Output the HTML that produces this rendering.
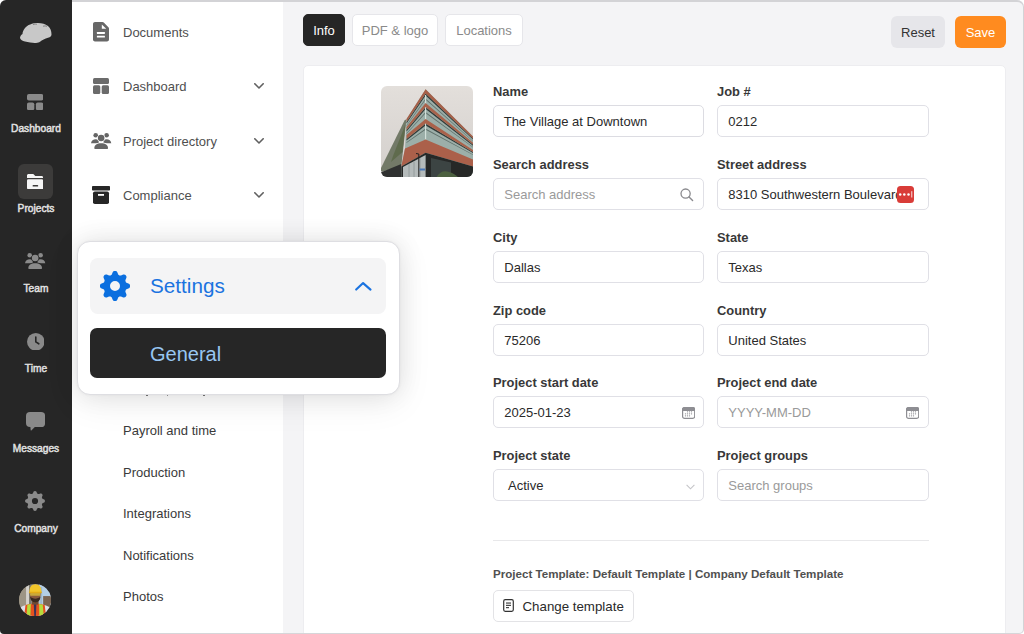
<!DOCTYPE html>
<html><head><meta charset="utf-8">
<style>
*{box-sizing:border-box;margin:0;padding:0}
html,body{width:1024px;height:634px;overflow:hidden;background:#fff;font-family:"Liberation Sans",sans-serif}
.win{position:absolute;left:0;top:0;width:1024px;height:634px;border-radius:6px 7px 5px 4px;overflow:hidden;background:#f4f4f6;}
.frame{position:absolute;left:72px;top:0;width:952px;height:634px;border-radius:0 7px 5px 0;border-top:2px solid #d3d3d6;border-right:1.4px solid #d3d3d6;border-bottom:1.4px solid #d6d6d9;pointer-events:none}
.abs{position:absolute}
.side{position:absolute;left:0;top:0;width:72px;height:634px;background:#262626}
.nav2{position:absolute;left:72px;top:0;width:211px;height:634px;background:#fff}
.main{position:absolute;left:283px;top:0;width:741px;height:634px;background:#f4f4f6}
.sl{position:absolute;left:0;width:72px;text-align:center;color:#e2e2e2;font-size:10.2px;font-weight:normal;-webkit-text-stroke:0.45px #e2e2e2;line-height:12px}
.n2{position:absolute;left:123px;font-size:13px;color:#4f4f4f;line-height:16px}
.n3{position:absolute;left:123px;font-size:13px;color:#3a3a3a;line-height:16px}
.chev{position:absolute;left:254px;width:10px;height:6px}
.tab{position:absolute;top:13.5px;height:32px;border-radius:5px;font-size:13px;line-height:32px;text-align:center;background:#fff;color:#8a8a8a;border:1px solid #e6e6ea}
.card{position:absolute;left:302.5px;top:64.5px;width:703px;height:600px;background:#fff;border-radius:5px;border:1px solid #ededf0}
.lbl{position:absolute;font-size:12.9px;font-weight:bold;color:#383838;line-height:16px}
.inp{position:absolute;margin-top:-1px;height:32px;width:211px;border:1px solid #e0e0e6;border-radius:5px;background:#fff;font-size:13px;line-height:31.8px;padding-left:10.3px;color:#2a2a2a}
.ph{color:#9a9a9a}
</style></head><body>
<div class="win">
  <div class="side">
    <!-- logo hard hat -->
    <svg class="abs" style="left:19.5px;top:22.7px" width="32" height="21" viewBox="0 0 32 21"><path fill="#c8c8c8" d="M0 15.1 C0.5 17 2.5 18.2 5 18.6 C9 19.6 13 20.2 16 20 C18 19.8 19 19.4 20 18.8 C22 17 25 15.8 28 14.8 C30.5 14 31.5 13 31.5 11.5 C31.5 8 30.5 5 28 3 C25.5 1 22 0 18 0 C12 0 7.5 2 5 5 C3.5 7 2.5 9 2.5 11 C1 12 0 13.5 0 15.1Z"/><path d="M13 1.6 C14.5 1 16 1 17 1.3 M23 3.2 C24.5 2.8 26 2.8 27 3.3" stroke="#555" stroke-width="0.6" fill="none"/></svg>
    <!-- dashboard -->
    <svg class="abs" style="left:27.2px;top:93.7px" width="16.2" height="16.2" viewBox="0 0 16.2 16.2"><rect x="0" y="0" width="16.2" height="6.6" rx="1.8" fill="#8a8a8a"/><rect x="0" y="8.4" width="7.3" height="7.8" rx="1.8" fill="#8a8a8a"/><rect x="8.9" y="8.4" width="7.3" height="7.8" rx="1.8" fill="#8a8a8a"/></svg>
    <div class="sl" style="top:122.8px">Dashboard</div>
    <div class="abs" style="left:18px;top:164px;width:35px;height:35px;border-radius:6px;background:#3c3b3a"></div>
    <svg class="abs" style="left:27px;top:174px" width="16.2" height="15.2" viewBox="0 0 16.2 15.2"><path d="M0 1.5 C0 0.7 0.7 0 1.5 0 L6.3 0 L8.3 2 L14.7 2 C15.5 2 16.2 2.7 16.2 3.5 L16.2 4.1 L0 4.1Z" fill="#f6f6f6"/><rect x="0" y="5.3" width="16.2" height="9.9" rx="1.2" fill="#f6f6f6"/><rect x="5.6" y="11.1" width="5.6" height="1.5" rx="0.7" fill="#3c3b3a"/></svg>
    <div class="sl" style="top:202.8px">Projects</div>
    <svg class="abs" style="left:25.2px;top:253.0px" width="21" height="17" viewBox="0 0 21 17"><circle cx="4.7" cy="2.3" r="2.3" fill="#8a8a8a"/><circle cx="15.6" cy="2.3" r="2.3" fill="#8a8a8a"/><path d="M0 10.2 C0.3 7.8 2.3 6.2 4.7 6.2 C6 6.2 7 6.6 7.8 7.2 L7.8 10.2Z" fill="#8a8a8a"/><path d="M20.3 10.2 C20 7.8 18 6.2 15.6 6.2 C14.3 6.2 13.3 6.6 12.5 7.2 L12.5 10.2Z" fill="#8a8a8a"/><circle cx="10.15" cy="5" r="3.3" fill="#8a8a8a" stroke="#262626" stroke-width="1.3" paint-order="stroke"/><path d="M3.3 15 C3.3 12 6 10.2 10.15 10.2 C14.3 10.2 17 12 17 15 L17 15.2 C17 15.6 16.7 15.9 16.3 15.9 L4 15.9 C3.6 15.9 3.3 15.6 3.3 15.2Z" fill="#8a8a8a" stroke="#262626" stroke-width="1.3" paint-order="stroke"/></svg>
    <div class="sl" style="top:282.8px">Team</div>
    <svg class="abs" style="left:26.5px;top:332.6px" width="17.6" height="17.6" viewBox="0 0 17.6 17.6"><circle cx="8.8" cy="8.8" r="8.8" fill="#8a8a8a"/><path d="M8.8 4 L8.8 8.9 L11.8 10.8" stroke="#262626" stroke-width="1.6" fill="none" stroke-linecap="round" stroke-linejoin="round"/></svg>
    <div class="sl" style="top:362.8px">Time</div>
    <svg class="abs" style="left:25.7px;top:412.1px" width="19.1" height="18.8" viewBox="0 0 19.1 18.8"><rect x="0" y="0" width="19.1" height="15" rx="4" fill="#8a8a8a"/><path d="M4.3 14 L4.7 18.2 C4.75 18.6 5.1 18.7 5.35 18.45 L9.8 14Z" fill="#8a8a8a"/></svg>
    <div class="sl" style="top:442.8px">Messages</div>
    <svg class="abs" style="left:25.3px;top:491.2px" width="20" height="20" viewBox="0 0 20 20"><path fill="#8a8a8a" fill-rule="evenodd" d="M10.00 0.10 L10.26 0.11 L10.52 0.15 L10.77 0.21 L11.02 0.33 L11.25 0.51 L11.46 0.79 L11.64 1.16 L11.79 1.58 L11.93 1.95 L12.08 2.25 L12.24 2.45 L12.40 2.60 L12.58 2.71 L12.76 2.80 L12.95 2.89 L13.13 2.96 L13.33 3.02 L13.53 3.07 L13.76 3.08 L14.01 3.05 L14.32 2.95 L14.69 2.78 L15.09 2.59 L15.48 2.45 L15.83 2.41 L16.12 2.44 L16.38 2.53 L16.60 2.67 L16.81 2.82 L17.00 3.00 L17.18 3.19 L17.33 3.40 L17.47 3.62 L17.56 3.88 L17.59 4.17 L17.55 4.52 L17.41 4.91 L17.22 5.31 L17.05 5.68 L16.95 5.99 L16.92 6.24 L16.93 6.47 L16.98 6.67 L17.04 6.87 L17.11 7.05 L17.20 7.24 L17.29 7.42 L17.40 7.60 L17.55 7.76 L17.75 7.92 L18.05 8.07 L18.42 8.21 L18.84 8.36 L19.21 8.54 L19.49 8.75 L19.67 8.98 L19.79 9.23 L19.85 9.48 L19.89 9.74 L19.90 10.00 L19.89 10.26 L19.85 10.52 L19.79 10.77 L19.67 11.02 L19.49 11.25 L19.21 11.46 L18.84 11.64 L18.42 11.79 L18.05 11.93 L17.75 12.08 L17.55 12.24 L17.40 12.40 L17.29 12.58 L17.20 12.76 L17.11 12.95 L17.04 13.13 L16.98 13.33 L16.93 13.53 L16.92 13.76 L16.95 14.01 L17.05 14.32 L17.22 14.69 L17.41 15.09 L17.55 15.48 L17.59 15.83 L17.56 16.12 L17.47 16.38 L17.33 16.60 L17.18 16.81 L17.00 17.00 L16.81 17.18 L16.60 17.33 L16.38 17.47 L16.12 17.56 L15.83 17.59 L15.48 17.55 L15.09 17.41 L14.69 17.22 L14.32 17.05 L14.01 16.95 L13.76 16.92 L13.53 16.93 L13.33 16.98 L13.13 17.04 L12.95 17.11 L12.76 17.20 L12.58 17.29 L12.40 17.40 L12.24 17.55 L12.08 17.75 L11.93 18.05 L11.79 18.42 L11.64 18.84 L11.46 19.21 L11.25 19.49 L11.02 19.67 L10.77 19.79 L10.52 19.85 L10.26 19.89 L10.00 19.90 L9.74 19.89 L9.48 19.85 L9.23 19.79 L8.98 19.67 L8.75 19.49 L8.54 19.21 L8.36 18.84 L8.21 18.42 L8.07 18.05 L7.92 17.75 L7.76 17.55 L7.60 17.40 L7.42 17.29 L7.24 17.20 L7.05 17.11 L6.87 17.04 L6.67 16.98 L6.47 16.93 L6.24 16.92 L5.99 16.95 L5.68 17.05 L5.31 17.22 L4.91 17.41 L4.52 17.55 L4.17 17.59 L3.88 17.56 L3.62 17.47 L3.40 17.33 L3.19 17.18 L3.00 17.00 L2.82 16.81 L2.67 16.60 L2.53 16.38 L2.44 16.12 L2.41 15.83 L2.45 15.48 L2.59 15.09 L2.78 14.69 L2.95 14.32 L3.05 14.01 L3.08 13.76 L3.07 13.53 L3.02 13.33 L2.96 13.13 L2.89 12.95 L2.80 12.76 L2.71 12.58 L2.60 12.40 L2.45 12.24 L2.25 12.08 L1.95 11.93 L1.58 11.79 L1.16 11.64 L0.79 11.46 L0.51 11.25 L0.33 11.02 L0.21 10.77 L0.15 10.52 L0.11 10.26 L0.10 10.00 L0.11 9.74 L0.15 9.48 L0.21 9.23 L0.33 8.98 L0.51 8.75 L0.79 8.54 L1.16 8.36 L1.58 8.21 L1.95 8.07 L2.25 7.92 L2.45 7.76 L2.60 7.60 L2.71 7.42 L2.80 7.24 L2.89 7.05 L2.96 6.87 L3.02 6.67 L3.07 6.47 L3.08 6.24 L3.05 5.99 L2.95 5.68 L2.78 5.31 L2.59 4.91 L2.45 4.52 L2.41 4.17 L2.44 3.88 L2.53 3.62 L2.67 3.40 L2.82 3.19 L3.00 3.00 L3.19 2.82 L3.40 2.67 L3.62 2.53 L3.88 2.44 L4.17 2.41 L4.52 2.45 L4.91 2.59 L5.31 2.78 L5.68 2.95 L5.99 3.05 L6.24 3.08 L6.47 3.07 L6.67 3.02 L6.87 2.96 L7.05 2.89 L7.24 2.80 L7.42 2.71 L7.60 2.60 L7.76 2.45 L7.92 2.25 L8.07 1.95 L8.21 1.58 L8.36 1.16 L8.54 0.79 L8.75 0.51 L8.98 0.33 L9.23 0.21 L9.48 0.15 L9.74 0.11Z M6.9 10 a3.1 3.1 0 1 0 6.2 0 a3.1 3.1 0 1 0 -6.2 0Z"/></svg>
    <div class="sl" style="top:522.8px">Company</div>
    <!-- avatar -->
    <svg class="abs" style="left:19.1px;top:583.7px" width="32.2" height="32.2" viewBox="0 0 32 32">
      <defs><clipPath id="av"><circle cx="16" cy="16" r="16"/></clipPath></defs>
      <g clip-path="url(#av)">
        <rect width="32" height="32" fill="#8f8a7e"/>
        <rect x="0" y="0" width="7" height="32" fill="#9d9585"/>
        <rect x="7" y="0" width="3" height="26" fill="#d4d2cc"/>
        <rect x="10" y="0" width="2" height="26" fill="#7d7a72"/>
        <rect x="20" y="0" width="12" height="22" fill="#b4cfe6"/>
        <rect x="24" y="12" width="8" height="14" fill="#7b6553"/>
        <rect x="21" y="3" width="2" height="18" fill="#9fb8cc"/>
        <path d="M0 32 L0.5 24 C3 22 6 21 9 20.5 L23 20.5 C26 21 29 22 31.5 24 L32 32Z" fill="#dedfea"/>
        <path d="M5 32 L6.5 21 C9 20 12 19.6 16 19.6 C20 19.6 23 20 25.5 21 L27 32Z" fill="#e4511f"/>
        <path d="M7.5 32 L8.3 20.6 L11.8 20 L11.3 32Z M20.2 32 L20 20 L23.6 20.6 L24.6 32Z" fill="#b5dc3c"/>
        <path d="M14.7 19.8 L17.3 19.8 L16.8 32 L15.2 32Z" fill="#3b3358"/>
        <rect x="13" y="17" width="6" height="3.5" fill="#6e4a34"/>
        <path d="M10.8 9 C10.8 14.5 12.5 18.3 16 18.3 C19.5 18.3 21.5 14.5 21.5 9Z" fill="#8b5b3d"/>
        <path d="M11 12.5 C11.5 16.5 13.3 18.4 16.2 18.4 C19.2 18.4 21 16.5 21.4 12.5 C20 14 18 14.6 16.2 14.6 C14.3 14.6 12.4 14 11 12.5Z" fill="#3a2a20"/>
        <rect x="11" y="8.8" width="10.2" height="3" rx="1.2" fill="#d7bd3c" opacity="0.8"/>
        <path d="M10.3 8 C10.3 3 12.6 0.3 16.3 0.3 C20 0.3 22.3 3 22.3 8Z" fill="#f2c62a"/>
        <path d="M9.8 7.6 L22.8 7.6 L22.6 9.1 L10 9.1Z" fill="#e3ac16"/>
      </g>
    </svg>
  </div>

  <div class="nav2">
    <svg class="abs" style="left:20.9px;top:22.1px" width="16" height="19.6" viewBox="0 0 16 19.6"><path d="M2 0 L9.5 0 C10 0 10.4 0.2 10.8 0.6 L15.4 5.2 C15.8 5.6 16 6 16 6.5 L16 17.6 C16 18.7 15.1 19.6 14 19.6 L2 19.6 C0.9 19.6 0 18.7 0 17.6 L0 2 C0 0.9 0.9 0 2 0Z" fill="#676767"/><path d="M8.8 2.5 L8.8 6.8 L13.2 6.8Z" fill="#fff"/><rect x="3.9" y="10.1" width="8" height="1.8" rx="0.3" fill="#fff"/><rect x="3.9" y="13.8" width="8" height="1.8" rx="0.3" fill="#fff"/></svg>
    <svg class="abs" style="left:21px;top:78px" width="16" height="16" viewBox="0 0 16 16"><rect x="0" y="0" width="16" height="6" rx="1.5" fill="#6b6b6b"/><rect x="0" y="7.3" width="7.3" height="8.7" rx="1.5" fill="#6b6b6b"/><rect x="8.7" y="7.3" width="7.3" height="8.7" rx="1.5" fill="#6b6b6b"/></svg>
    <svg class="abs" style="left:19.200000000000003px;top:132.8px" width="21" height="17" viewBox="0 0 21 17"><circle cx="4.7" cy="2.3" r="2.3" fill="#656565"/><circle cx="15.6" cy="2.3" r="2.3" fill="#656565"/><path d="M0 10.2 C0.3 7.8 2.3 6.2 4.7 6.2 C6 6.2 7 6.6 7.8 7.2 L7.8 10.2Z" fill="#656565"/><path d="M20.3 10.2 C20 7.8 18 6.2 15.6 6.2 C14.3 6.2 13.3 6.6 12.5 7.2 L12.5 10.2Z" fill="#656565"/><circle cx="10.15" cy="5" r="3.3" fill="#656565" stroke="#fff" stroke-width="1.3" paint-order="stroke"/><path d="M3.3 15 C3.3 12 6 10.2 10.15 10.2 C14.3 10.2 17 12 17 15 L17 15.2 C17 15.6 16.7 15.9 16.3 15.9 L4 15.9 C3.6 15.9 3.3 15.6 3.3 15.2Z" fill="#656565" stroke="#fff" stroke-width="1.3" paint-order="stroke"/></svg>
    <svg class="abs" style="left:20px;top:186px" width="18" height="18" viewBox="0 0 18 18"><rect x="0" y="0" width="18" height="4.5" rx="0.8" fill="#262626"/><rect x="1" y="5.5" width="16" height="12.5" rx="1.8" fill="#262626"/><rect x="6" y="8" width="6" height="1.8" fill="#fff"/></svg>
  </div>
  <div class="n2" style="top:25px">Documents</div>
  <div class="n2" style="top:79px">Dashboard</div>
  <div class="n2" style="top:134px">Project directory</div>
  <div class="n2" style="top:188px">Compliance</div>
  <svg class="chev" style="top:83px" viewBox="0 0 10 6"><path d="M0.8 0.8 L5 5 L9.2 0.8" stroke="#606060" stroke-width="1.6" stroke-linecap="round" stroke-linejoin="round" fill="none"/></svg>
  <svg class="chev" style="top:138px" viewBox="0 0 10 6"><path d="M0.8 0.8 L5 5 L9.2 0.8" stroke="#606060" stroke-width="1.6" stroke-linecap="round" stroke-linejoin="round" fill="none"/></svg>
  <svg class="chev" style="top:192px" viewBox="0 0 10 6"><path d="M0.8 0.8 L5 5 L9.2 0.8" stroke="#606060" stroke-width="1.6" stroke-linecap="round" stroke-linejoin="round" fill="none"/></svg>

  <div class="abs" style="left:145.5px;top:395px;width:2px;height:1.2px;background:#777"></div><div class="abs" style="left:166.8px;top:395px;width:1.4px;height:1.2px;background:#999"></div><div class="abs" style="left:203px;top:395px;width:2.2px;height:1.2px;background:#777"></div>
  <div class="n3" style="top:423px">Payroll and time</div>
  <div class="n3" style="top:465px">Production</div>
  <div class="n3" style="top:506px">Integrations</div>
  <div class="n3" style="top:548px">Notifications</div>
  <div class="n3" style="top:589px">Photos</div>

  <div class="main"></div>
  <div class="tab" style="left:303px;width:42px;background:#262626;color:#fff;border-color:#262626">Info</div>
  <div class="tab" style="left:352px;width:86px">PDF &amp; logo</div>
  <div class="tab" style="left:445px;width:78px">Locations</div>
  <div class="abs" style="left:891px;top:16px;width:54px;height:32px;border-radius:6px;background:#e6e6ea;color:#333;font-size:13px;line-height:33px;text-align:center">Reset</div>
  <div class="abs" style="left:955px;top:16px;width:51px;height:32px;border-radius:6px;background:#ff8b1f;color:#fff;font-size:13px;line-height:33px;text-align:center">Save</div>

  <div class="card"></div>
  <!-- photo -->
  <svg class="abs" style="left:381px;top:85.8px" width="92" height="91" viewBox="0 0 92 91">
    <defs><clipPath id="ph"><rect width="92" height="91" rx="6"/></clipPath>
    <linearGradient id="sky" x1="0" y1="0" x2="0" y2="1"><stop offset="0" stop-color="#e3dfdb"/><stop offset="1" stop-color="#d3cfcc"/></linearGradient></defs>
    <g clip-path="url(#ph)"><rect width="92" height="91" fill="url(#sky)"/>
      <path d="M23.5 34.5 L25.5 33.0 L20.3 80.0 L2.0 85.5 L0.0 85.0 L0.0 82.0Z" fill="#737a68"/>
      <path d="M23.0 42.0 L24.5 38.0 L21.5 66.0 L10.0 76.0 L12.0 70.0Z" fill="#5c6849" opacity="0.85"/>
      <path d="M20.3 78.0 L20.3 92.0 L0.0 92.0 L0.0 86.0 L2.0 85.5Z" fill="#2f3130"/>
      <path d="M25.5 33.0 L44.6 3.3 L92.0 50.5 L92.0 92.0 L20.3 92.0 L20.3 80.6 L24.0 62.6Z" fill="#9cafa9"/>
      <path d="M25.5 36.0 L44.6 7.5 L92.0 52.5 L92.0 53.6 L44.6 9.5 L25.5 37.6Z" fill="#333c3a"/>
      <path d="M25.5 39.2 L44.6 12.5 L92.0 54.9 L92.0 55.5 L44.6 13.7 L25.5 40.0Z" fill="#5f706b"/>
      <path d="M25.5 44.0 L44.6 21.0 L92.0 58.6 L92.0 59.7 L44.6 23.0 L25.5 45.6Z" fill="#333c3a"/>
      <path d="M25.5 47.2 L44.6 26.0 L92.0 61.0 L92.0 61.6 L44.6 27.2 L25.5 48.0Z" fill="#5f706b"/>
      <path d="M25.5 53.0 L44.6 37.5 L92.0 66.0 L92.0 67.1 L44.6 39.5 L25.5 54.6Z" fill="#333c3a"/>
      <path d="M25.5 56.2 L44.6 42.5 L92.0 68.4 L92.0 69.0 L44.6 43.7 L25.5 57.0Z" fill="#5f706b"/>
      <path d="M44.6 9 L44.6 53.6" stroke="#d6e2dd" stroke-width="1.1"/>
      <path d="M25.5 33.0 L44.6 3.3 L92.0 50.5 L92.0 52.5 L44.6 7.5 L25.5 36.0Z" fill="#a65f48"/>
      <path d="M25.5 41.0 L44.6 17.1 L92.0 56.8 L92.0 58.6 L44.6 21.0 L25.5 44.0Z" fill="#a8634c"/>
      <path d="M25.5 49.0 L44.6 33.0 L92.0 64.0 L92.0 66.0 L44.6 37.5 L25.5 53.0Z" fill="#aa624b"/>
      <path d="M24.0 62.6 L44.6 53.6 L92.0 73.5 L92.0 80.5 L44.6 66.8 L20.3 80.6Z" fill="#ab604a"/>
      <path d="M20.3 80.6 L44.6 66.8 L92.0 80.5 L92.0 92.0 L20.3 92.0Z" fill="#262827"/>
      <path d="M22.0 81.0 L44.6 69.0 L44.6 92.0 L22.0 92.0Z" fill="#b5bbbb"/>
      <path d="M28 92 L28 78 M33 92 L33 75.5 M39 92 L39 72" stroke="#8d9595" stroke-width="0.8"/>
      <path d="M37.8 92 L37.8 68 L35 67.5" stroke="#222" stroke-width="1" fill="none"/>
      <rect x="38.5" y="82.5" width="5.5" height="2" fill="#4a78b8"/>
      <path d="M50.0 72.0 L70.0 76.5 L70.0 92.0 L50.0 92.0Z" fill="#3c4443"/>
      <path d="M55 92 C58 86 63 84 68 86 C72 87 76 90 78 92Z" fill="#4c6040"/></g>
  </svg>

  <div class="lbl" style="left:493px;top:84px">Name</div>
  <div class="inp" style="left:493px;top:105.5px;border:1.6px solid #dcdce2;line-height:31.2px;padding-left:9.7px">The Village at Downtown</div>
  <div class="lbl" style="left:717px;top:84px">Job #</div>
  <div class="inp" style="left:717px;width:212px;top:106px">0212</div>

  <div class="lbl" style="left:493px;top:157px">Search address</div>
  <div class="inp ph" style="left:493px;top:179px">Search address</div>
  <svg class="abs" style="left:680px;top:188px" width="14" height="14" viewBox="0 0 14 14"><circle cx="5.6" cy="5.6" r="4.6" stroke="#8a8a8e" stroke-width="1.3" fill="none"/><path d="M9 9 L12.6 12.6" stroke="#8a8a8e" stroke-width="1.4" stroke-linecap="round"/></svg>
  <div class="lbl" style="left:717px;top:157px">Street address</div>
  <div class="inp" style="left:717px;width:212px;top:179px;overflow:hidden;white-space:nowrap">8310 Southwestern Boulevard</div>
  <svg class="abs" style="left:896.5px;top:186px" width="17" height="17" viewBox="0 0 17 17"><rect width="17" height="17" rx="3.5" fill="#d93c38"/><circle cx="3.2" cy="8.5" r="1.25" fill="#fff"/><circle cx="7.3" cy="8.5" r="1.25" fill="#fff"/><circle cx="11.5" cy="8.5" r="1.25" fill="#fff"/><rect x="14.2" y="5.2" width="1.1" height="6.3" fill="#f6d0cf"/></svg>

  <div class="lbl" style="left:493px;top:230px">City</div>
  <div class="inp" style="left:493px;top:252px">Dallas</div>
  <div class="lbl" style="left:717px;top:230px">State</div>
  <div class="inp" style="left:717px;width:212px;top:252px">Texas</div>

  <div class="lbl" style="left:493px;top:303px">Zip code</div>
  <div class="inp" style="left:493px;top:325px">75206</div>
  <div class="lbl" style="left:717px;top:303px">Country</div>
  <div class="inp" style="left:717px;width:212px;top:325px">United States</div>

  <div class="lbl" style="left:493px;top:375px">Project start date</div>
  <div class="inp" style="left:493px;top:397px">2025-01-23</div>
  <div class="lbl" style="left:717px;top:375px">Project end date</div>
  <div class="inp ph" style="left:717px;width:212px;top:397px">YYYY-MM-DD</div>
  <svg class="abs" style="left:682px;top:407px" width="13.3" height="12" viewBox="0 0 13.3 12"><rect x="0.6" y="0.6" width="12.1" height="10.8" rx="2" stroke="#8e8e93" stroke-width="1.2" fill="none"/><path d="M0.6 3.4 L0.6 2.6 C0.6 1.5 1.5 0.6 2.6 0.6 L10.7 0.6 C11.8 0.6 12.7 1.5 12.7 2.6 L12.7 3.4Z" fill="#8e8e93" stroke="#8e8e93" stroke-width="1.2"/><g fill="#8e8e93"><circle cx="5.5" cy="4.8" r="0.65"/><circle cx="7.5" cy="4.8" r="0.65"/><circle cx="9.5" cy="4.8" r="0.65"/><circle cx="3.5" cy="6.8" r="0.65"/><circle cx="5.5" cy="6.8" r="0.65"/><circle cx="7.5" cy="6.8" r="0.65"/><circle cx="9.5" cy="6.8" r="0.65"/><circle cx="3.5" cy="8.8" r="0.65"/><circle cx="5.5" cy="8.8" r="0.65"/><circle cx="7.5" cy="8.8" r="0.65"/></g></svg>
  <svg class="abs" style="left:906px;top:407px" width="13.3" height="12" viewBox="0 0 13.3 12"><rect x="0.6" y="0.6" width="12.1" height="10.8" rx="2" stroke="#8e8e93" stroke-width="1.2" fill="none"/><path d="M0.6 3.4 L0.6 2.6 C0.6 1.5 1.5 0.6 2.6 0.6 L10.7 0.6 C11.8 0.6 12.7 1.5 12.7 2.6 L12.7 3.4Z" fill="#8e8e93" stroke="#8e8e93" stroke-width="1.2"/><g fill="#8e8e93"><circle cx="5.5" cy="4.8" r="0.65"/><circle cx="7.5" cy="4.8" r="0.65"/><circle cx="9.5" cy="4.8" r="0.65"/><circle cx="3.5" cy="6.8" r="0.65"/><circle cx="5.5" cy="6.8" r="0.65"/><circle cx="7.5" cy="6.8" r="0.65"/><circle cx="9.5" cy="6.8" r="0.65"/><circle cx="3.5" cy="8.8" r="0.65"/><circle cx="5.5" cy="8.8" r="0.65"/><circle cx="7.5" cy="8.8" r="0.65"/></g></svg>

  <div class="lbl" style="left:493px;top:448px">Project state</div>
  <div class="inp" style="left:493px;top:470px;padding-left:14px">Active</div>
  <svg class="abs" style="left:686px;top:483.5px" width="9" height="6" viewBox="0 0 9 6"><path d="M0.6 0.8 L4.5 4.8 L8.4 0.8" stroke="#c4c4c8" stroke-width="1.1" fill="none"/></svg>
  <div class="lbl" style="left:717px;top:448px">Project groups</div>
  <div class="inp ph" style="left:717px;width:212px;top:470px">Search groups</div>

  <div class="abs" style="left:493px;top:539.5px;width:436px;height:1px;background:#e8e8ea"></div>
  <div class="abs" style="left:493px;top:567px;font-size:11.6px;font-weight:bold;color:#505050;line-height:13px">Project Template: Default Template | Company Default Template</div>
  <div class="abs" style="left:493px;top:590px;width:141px;height:32px;border:1px solid #e3e3e6;border-radius:5px;background:#fff"></div>
  <svg class="abs" style="left:503px;top:599px" width="11" height="13" viewBox="0 0 11 13"><rect x="0.7" y="0.7" width="9.6" height="11.6" rx="1.5" stroke="#333" stroke-width="1.2" fill="none"/><rect x="3" y="3.5" width="5" height="1.1" fill="#333"/><rect x="3" y="5.8" width="5" height="1.1" fill="#333"/><rect x="3" y="8.1" width="3" height="1.1" fill="#333"/></svg>
  <div class="abs" style="left:522.5px;top:598.5px;font-size:13.3px;color:#2a2a2a;line-height:16px">Change template</div>

  <!-- popup -->
  <div class="abs" style="left:77px;top:241px;width:323px;height:154px;border-radius:13px;background:#fff;border:1px solid #dedee2;box-shadow:0 0 3px rgba(0,0,0,0.05),0 -1px 26px rgba(0,0,0,0.09),0 8px 36px rgba(0,0,0,0.07)"></div>
  <div class="abs" style="left:90px;top:258px;width:296px;height:55.5px;border-radius:8px;background:#f4f4f5"></div>
  <svg class="abs" style="left:100px;top:271px" width="30" height="30" viewBox="0 0 30 30"><path fill="#0b6fdf" fill-rule="evenodd" d="M15.00 -0.10 L15.39 -0.08 L15.79 -0.01 L16.17 0.11 L16.54 0.32 L16.89 0.63 L17.21 1.08 L17.48 1.65 L17.71 2.27 L17.92 2.84 L18.13 3.31 L18.36 3.65 L18.60 3.91 L18.86 4.10 L19.13 4.25 L19.40 4.38 L19.68 4.48 L19.98 4.56 L20.30 4.61 L20.65 4.60 L21.05 4.52 L21.53 4.34 L22.09 4.08 L22.69 3.81 L23.29 3.60 L23.82 3.50 L24.29 3.53 L24.70 3.64 L25.06 3.83 L25.38 4.06 L25.68 4.32 L25.94 4.62 L26.17 4.94 L26.36 5.30 L26.47 5.71 L26.50 6.18 L26.40 6.71 L26.19 7.31 L25.92 7.91 L25.66 8.47 L25.48 8.95 L25.40 9.35 L25.39 9.70 L25.44 10.02 L25.52 10.32 L25.62 10.60 L25.75 10.87 L25.90 11.14 L26.09 11.40 L26.35 11.64 L26.69 11.87 L27.16 12.08 L27.73 12.29 L28.35 12.52 L28.92 12.79 L29.37 13.11 L29.68 13.46 L29.89 13.83 L30.01 14.21 L30.08 14.61 L30.10 15.00 L30.08 15.39 L30.01 15.79 L29.89 16.17 L29.68 16.54 L29.37 16.89 L28.92 17.21 L28.35 17.48 L27.73 17.71 L27.16 17.92 L26.69 18.13 L26.35 18.36 L26.09 18.60 L25.90 18.86 L25.75 19.13 L25.62 19.40 L25.52 19.68 L25.44 19.98 L25.39 20.30 L25.40 20.65 L25.48 21.05 L25.66 21.53 L25.92 22.09 L26.19 22.69 L26.40 23.29 L26.50 23.82 L26.47 24.29 L26.36 24.70 L26.17 25.06 L25.94 25.38 L25.68 25.68 L25.38 25.94 L25.06 26.17 L24.70 26.36 L24.29 26.47 L23.82 26.50 L23.29 26.40 L22.69 26.19 L22.09 25.92 L21.53 25.66 L21.05 25.48 L20.65 25.40 L20.30 25.39 L19.98 25.44 L19.68 25.52 L19.40 25.62 L19.13 25.75 L18.86 25.90 L18.60 26.09 L18.36 26.35 L18.13 26.69 L17.92 27.16 L17.71 27.73 L17.48 28.35 L17.21 28.92 L16.89 29.37 L16.54 29.68 L16.17 29.89 L15.79 30.01 L15.39 30.08 L15.00 30.10 L14.61 30.08 L14.21 30.01 L13.83 29.89 L13.46 29.68 L13.11 29.37 L12.79 28.92 L12.52 28.35 L12.29 27.73 L12.08 27.16 L11.87 26.69 L11.64 26.35 L11.40 26.09 L11.14 25.90 L10.87 25.75 L10.60 25.62 L10.32 25.52 L10.02 25.44 L9.70 25.39 L9.35 25.40 L8.95 25.48 L8.47 25.66 L7.91 25.92 L7.31 26.19 L6.71 26.40 L6.18 26.50 L5.71 26.47 L5.30 26.36 L4.94 26.17 L4.62 25.94 L4.32 25.68 L4.06 25.38 L3.83 25.06 L3.64 24.70 L3.53 24.29 L3.50 23.82 L3.60 23.29 L3.81 22.69 L4.08 22.09 L4.34 21.53 L4.52 21.05 L4.60 20.65 L4.61 20.30 L4.56 19.98 L4.48 19.68 L4.38 19.40 L4.25 19.13 L4.10 18.86 L3.91 18.60 L3.65 18.36 L3.31 18.13 L2.84 17.92 L2.27 17.71 L1.65 17.48 L1.08 17.21 L0.63 16.89 L0.32 16.54 L0.11 16.17 L-0.01 15.79 L-0.08 15.39 L-0.10 15.00 L-0.08 14.61 L-0.01 14.21 L0.11 13.83 L0.32 13.46 L0.63 13.11 L1.08 12.79 L1.65 12.52 L2.27 12.29 L2.84 12.08 L3.31 11.87 L3.65 11.64 L3.91 11.40 L4.10 11.14 L4.25 10.87 L4.38 10.60 L4.48 10.32 L4.56 10.02 L4.61 9.70 L4.60 9.35 L4.52 8.95 L4.34 8.47 L4.08 7.91 L3.81 7.31 L3.60 6.71 L3.50 6.18 L3.53 5.71 L3.64 5.30 L3.83 4.94 L4.06 4.62 L4.32 4.32 L4.62 4.06 L4.94 3.83 L5.30 3.64 L5.71 3.53 L6.18 3.50 L6.71 3.60 L7.31 3.81 L7.91 4.08 L8.47 4.34 L8.95 4.52 L9.35 4.60 L9.70 4.61 L10.02 4.56 L10.32 4.48 L10.60 4.38 L10.87 4.25 L11.14 4.10 L11.40 3.91 L11.64 3.65 L11.87 3.31 L12.08 2.84 L12.29 2.27 L12.52 1.65 L12.79 1.08 L13.11 0.63 L13.46 0.32 L13.83 0.11 L14.21 -0.01 L14.61 -0.08Z M10 15 a5 5 0 1 0 10 0 a5 5 0 1 0 -10 0Z"/></svg>
  <div class="abs" style="left:150px;top:273.5px;font-size:20.7px;color:#1a73e0;line-height:24px">Settings</div>
  <svg class="abs" style="left:355px;top:281px" width="17" height="10" viewBox="0 0 17 10"><path d="M1.2 8.6 L8.1 2.1 L15.5 8.6" stroke="#1a73e0" stroke-width="2.1" stroke-linecap="round" stroke-linejoin="round" fill="none"/></svg>
  <div class="abs" style="left:90px;top:328px;width:296px;height:50px;border-radius:7px;background:#262626"></div>
  <div class="abs" style="left:150px;top:342px;font-size:20px;color:#98c6f2;line-height:24px">General</div>
</div>
<div class="frame"></div>
</body></html>
